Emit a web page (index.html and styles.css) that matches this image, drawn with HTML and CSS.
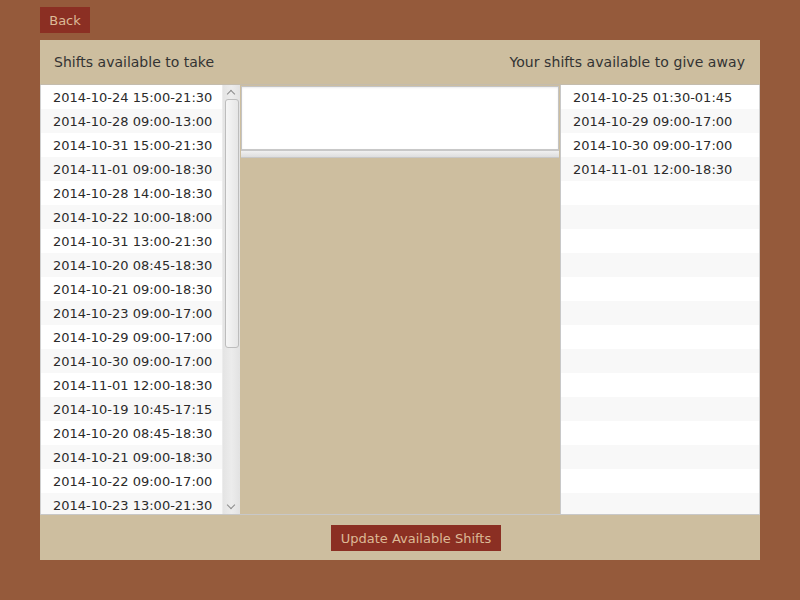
FILE: index.html
```html
<!DOCTYPE html>
<html>
<head>
<meta charset="utf-8">
<link rel="stylesheet" href="styles.css">
</head>
<body>
<div class="page">
  <div class="topbar"><button class="btn back">Back</button></div>
  <div class="panel">
    <div class="header">
      <span>Shifts available to take</span>
      <span>Your shifts available to give away</span>
    </div>
    <div class="body">
      <div class="list left">
        <div class="rows">
          <div class="row">2014-10-24 15:00-21:30</div>
          <div class="row">2014-10-28 09:00-13:00</div>
          <div class="row">2014-10-31 15:00-21:30</div>
          <div class="row">2014-11-01 09:00-18:30</div>
          <div class="row">2014-10-28 14:00-18:30</div>
          <div class="row">2014-10-22 10:00-18:00</div>
          <div class="row">2014-10-31 13:00-21:30</div>
          <div class="row">2014-10-20 08:45-18:30</div>
          <div class="row">2014-10-21 09:00-18:30</div>
          <div class="row">2014-10-23 09:00-17:00</div>
          <div class="row">2014-10-29 09:00-17:00</div>
          <div class="row">2014-10-30 09:00-17:00</div>
          <div class="row">2014-11-01 12:00-18:30</div>
          <div class="row">2014-10-19 10:45-17:15</div>
          <div class="row">2014-10-20 08:45-18:30</div>
          <div class="row">2014-10-21 09:00-18:30</div>
          <div class="row">2014-10-22 09:00-17:00</div>
          <div class="row">2014-10-23 13:00-21:30</div>
        </div>
        <div class="vscroll">
          <div class="arrow up"></div>
          <div class="track"><div class="thumb"></div></div>
          <div class="arrow down"></div>
        </div>
      </div>
      <div class="middle">
        <div class="textbox"></div>
        <div class="divider"></div>
      </div>
      <div class="list right">
        <div class="rows">
          <div class="row">2014-10-25 01:30-01:45</div>
          <div class="row">2014-10-29 09:00-17:00</div>
          <div class="row">2014-10-30 09:00-17:00</div>
          <div class="row">2014-11-01 12:00-18:30</div>
          <div class="row"></div>
          <div class="row"></div>
          <div class="row"></div>
          <div class="row"></div>
          <div class="row"></div>
          <div class="row"></div>
          <div class="row"></div>
          <div class="row"></div>
          <div class="row"></div>
          <div class="row"></div>
          <div class="row"></div>
          <div class="row"></div>
          <div class="row"></div>
          <div class="row"></div>
        </div>
      </div>
    </div>
    <div class="footer"><button class="btn update">Update Available Shifts</button></div>
  </div>
</div>
</body>
</html>
```
FILE: styles.css
```css
html, body {
  margin: 0;
  padding: 0;
  background: #955a3b;
  font-family: "DejaVu Sans", sans-serif;
  font-size: 13px;
  color: #333;
}
.page {
  width: 800px;
  height: 600px;
  padding: 7px 40px 0 40px;
  box-sizing: border-box;
}
.topbar {
  height: 33px;
}
.btn {
  font-family: "DejaVu Sans", sans-serif;
  font-size: 13px;
  background: #8b2f23;
  color: #dcb996;
  border: 1px solid #8b2f23;
  height: 26px;
  padding: 2px 8px 0 8px;
  margin: 0;
  line-height: 22px;
  box-sizing: border-box;
}
.back {
  width: 50px;
}
.panel {
  width: 720px;
  height: 520px;
  background: #cdbe9f;
  display: flex;
  flex-direction: column;
}
.header {
  height: 44px;
  display: flex;
  justify-content: space-between;
  align-items: center;
  padding: 0 15px 0 14px;
  font-size: 14px;
  color: #333;
  box-sizing: border-box;
}
.header span:last-child {
  letter-spacing: 0.06px;
}
.body {
  height: 431px;
  display: flex;
  border-top: 1px solid #c4bcad;
  border-bottom: 1px solid #c8c8c8;
  box-sizing: border-box;
}
.list {
  background: #fff;
  overflow: hidden;
  display: flex;
  height: 100%;
}
.list.left {
  width: 200px;
  border-left: 1px solid #d0d0d0;
  box-sizing: border-box;
}
.list.right {
  width: 200px;
  border-left: 1px solid #c8c8c8;
  border-right: 1px solid #d0d0d0;
  box-sizing: border-box;
}
.rows {
  flex: 1;
  overflow: hidden;
}
.row {
  height: 24px;
  box-sizing: border-box;
  padding-top: 2px;
  line-height: 22px;
  padding-left: 12px;
  white-space: nowrap;
  color: #2b2b2b;
}
.row:nth-child(even) {
  background: #f8f8f8;
}
.vscroll {
  width: 17px;
  display: flex;
  flex-direction: column;
  background: linear-gradient(to right, #e4e4e4, #ececec 50%, #e2e2e2);
  border-left: 1px solid #ececec;
}
.arrow {
  height: 13px;
  position: relative;
}
.arrow::after {
  content: "";
  position: absolute;
  left: 5px;
  width: 5px;
  height: 5px;
  border-color: #8c8c8c;
  border-style: solid;
  border-width: 1px 0 0 1px;
}
.arrow.up::after {
  top: 6px;
  transform: rotate(45deg);
}
.arrow.down::after {
  top: 1px;
  transform: rotate(225deg);
}
.track {
  flex: 1;
  padding: 1px 1px 0 2px;
}
.thumb {
  height: 249px;
  border: 1px solid #bdbdbd;
  border-radius: 3px;
  background: linear-gradient(to right, #f6f6f6, #e6e6e6);
  box-sizing: border-box;
}
.middle {
  width: 320px;
  display: flex;
  flex-direction: column;
  padding-top: 1px;
}
.textbox {
  height: 65px;
  background: #fff;
  border: 1px solid #c4c4c4;
  border-bottom: 2px solid #c8c8c8;
  box-sizing: border-box;
  margin-left: 1px;
  margin-right: 1px;
  box-shadow: inset 0 1px 2px rgba(0,0,0,0.08);
}
.divider {
  height: 6px;
  background: linear-gradient(to bottom, #f0f0f0, #dedede);
  border-bottom: 1px solid #c8c8c8;
  margin: 0 1px;
}
.footer {
  flex: 1;
  display: flex;
  align-items: center;
  padding-left: 291px;
}
.update {
  width: 170px;
  padding: 2px 0 0 0;
}
```
